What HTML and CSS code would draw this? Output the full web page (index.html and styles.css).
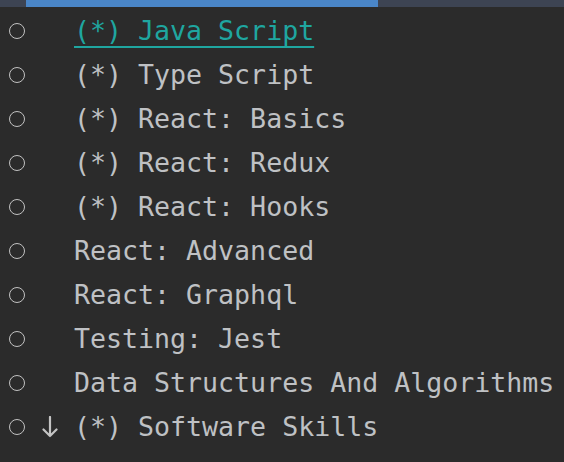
FILE: index.html
```html
<!DOCTYPE html>
<html>
<head>
<meta charset="utf-8">
<link rel="stylesheet" href="styles.css">
</head>
<body>
<div class="topbar"><div class="tab"></div></div>
<ul class="list">
  <li class="row"><span class="dot"></span><span class="mark"></span><span class="label active">(*) Java Script</span></li>
  <li class="row"><span class="dot"></span><span class="mark"></span><span class="label">(*) Type Script</span></li>
  <li class="row"><span class="dot"></span><span class="mark"></span><span class="label">(*) React: Basics</span></li>
  <li class="row"><span class="dot"></span><span class="mark"></span><span class="label">(*) React: Redux</span></li>
  <li class="row"><span class="dot"></span><span class="mark"></span><span class="label">(*) React: Hooks</span></li>
  <li class="row"><span class="dot"></span><span class="mark"></span><span class="label">React: Advanced</span></li>
  <li class="row"><span class="dot"></span><span class="mark"></span><span class="label">React: Graphql</span></li>
  <li class="row"><span class="dot"></span><span class="mark"></span><span class="label">Testing: Jest</span></li>
  <li class="row"><span class="dot"></span><span class="mark"></span><span class="label">Data Structures And Algorithms</span></li>
  <li class="row"><span class="dot"></span><span class="mark"><svg width="16" height="22" viewBox="0 0 16 22"><path d="M8 1 V20 M1.5 13.5 L8 20 L14.5 13.5" fill="none" stroke="#c4c4c4" stroke-width="2.2" stroke-linecap="round" stroke-linejoin="round"/></svg></span><span class="label">(*) Software Skills</span></li>
</ul>
</body>
</html>
```
FILE: styles.css
```css
html, body {
  margin: 0;
  padding: 0;
  background: #2b2b2b;
  overflow: hidden;
}
body {
  width: 564px;
  height: 462px;
  font-family: "DejaVu Sans Mono", "Liberation Mono", monospace;
  color: #bfc1c4;
}
.topbar {
  height: 7px;
  background: #3d4453;
  display: flex;
  padding-left: 26px;
}
.tab {
  width: 352px;
  height: 7px;
  background: #4a86c8;
}
.list {
  list-style: none;
  margin: 0;
  padding: 2px 0 0 0;
}
.row {
  height: 44px;
  display: flex;
  align-items: center;
}
.dot {
  box-sizing: border-box;
  width: 16px;
  height: 16px;
  border: 1.8px solid #c2c2c2;
  border-radius: 50%;
  margin-left: 9px;
  margin-bottom: 1px;
}
.mark {
  width: 16px;
  height: 22px;
  margin-left: 17px;
  display: flex;
}
.label {
  margin-left: 16px;
  font-size: 26.6px;
  line-height: 44px;
  white-space: nowrap;
}
.active {
  color: #1fa6a0;
  text-decoration: underline;
  text-decoration-thickness: 2px;
  text-underline-offset: 6px;
}
```
